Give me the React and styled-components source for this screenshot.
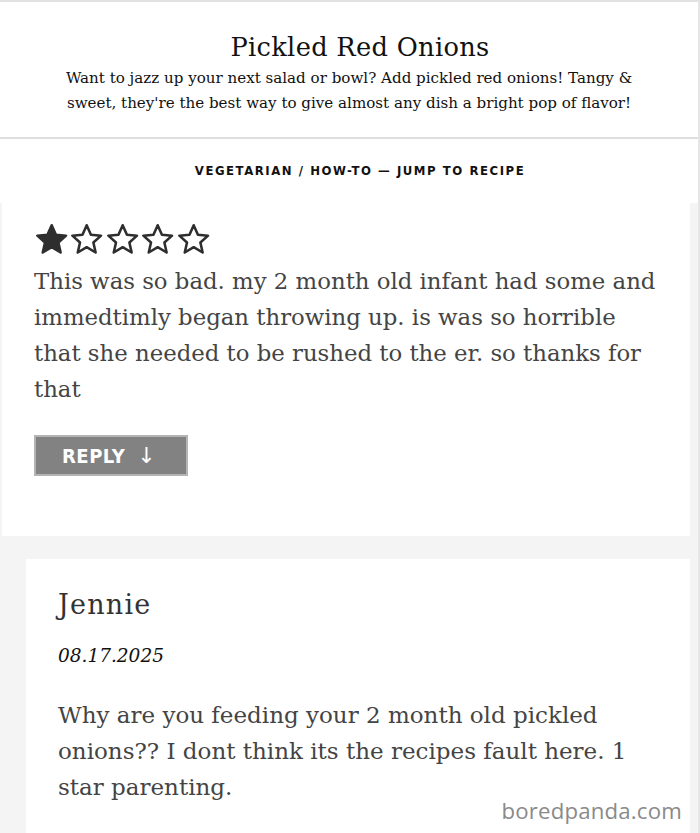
import React from "react";
import styled, { createGlobalStyle } from "styled-components";

const Global = createGlobalStyle`
  html, body { margin: 0; padding: 0; background: #fff; }
  body { width: 700px; height: 833px; overflow: hidden; }
`;

const Page = styled.div`
  position: relative;
  width: 700px;
  height: 833px;
  box-sizing: border-box;
  border-top: 2px solid #e2e2e2;
  border-right: 2px solid #e6e6e6;
  overflow: hidden;
  background: #fff;
`;

const Header = styled.header`
  display: flex;
  flex-direction: column;
  align-items: center;
  padding: 29px 20px 0;
  height: 137px;
  box-sizing: border-box;
  border-bottom: 2px solid #dedede;
`;

const Title = styled.h1`
  margin: 0;
  padding-left: 22px;
  font-family: "DejaVu Serif", serif;
  font-weight: normal;
  font-size: 25.7px;
  letter-spacing: 0.3px;
  color: #111;
  line-height: 32px;
`;

const Lede = styled.p`
  margin: 3px 0 0;
  font-family: "DejaVu Serif", serif;
  font-size: 15.1px;
  line-height: 25px;
  color: #111;
  text-align: center;
  width: 600px;
`;

const Nav = styled.nav`
  height: 62px;
  display: flex;
  align-items: center;
  justify-content: center;
  padding-left: 22px;
  font-family: "DejaVu Sans Condensed", "DejaVu Sans", sans-serif;
  font-weight: bold;
  font-size: 13px;
  letter-spacing: 1.55px;
  color: #111;
  padding-bottom: 2px;
`;

const Thread = styled.section`
  background: #f4f4f4;
  padding: 0 8px 0 2px;
  height: 640px;
`;

const Card = styled.article`
  background: #fff;
  padding: ${(p) => p.$pad};
  height: ${(p) => p.$h};
  box-sizing: border-box;
`;

const Nested = styled.div`
  padding: 23px 0 0 24px;
`;

const Stars = styled.div`
  display: flex;
  margin-bottom: 6px;
`;

const Body = styled.p`
  margin: ${(p) => p.$mt || "0"} 0 0;
  font-family: "DejaVu Serif", serif;
  font-weight: 300;
  font-size: ${(p) => p.$size};
  line-height: ${(p) => p.$lh};
  color: #444;
`;

const ReplyButton = styled.button`
  margin-top: 28px;
  display: flex;
  align-items: center;
  gap: 12px;
  width: 154px;
  height: 41px;
  box-sizing: border-box;
  padding: 0 0 0 26px;
  background: #828282;
  border: 2px solid #b4b4b4;
  color: #fff;
  font-family: "DejaVu Sans Condensed", "DejaVu Sans", sans-serif;
  font-weight: bold;
  font-size: 20px;
  letter-spacing: 0.5px;
  cursor: pointer;
`;

const Arrow = styled.span`
  font-family: "DejaVu Sans", sans-serif;
  font-weight: normal;
  font-size: 22px;
`;

const Author = styled.div`
  font-family: "DejaVu Serif", serif;
  font-weight: 300;
  font-size: 27px;
  letter-spacing: 1.2px;
  color: #333;
  line-height: 32px;
`;

const DateLine = styled.div`
  margin-top: 23px;
  font-family: "DejaVu Serif", serif;
  font-style: italic;
  font-size: 18.5px;
  color: #111;
  line-height: 24px;
`;

const Watermark = styled.div`
  position: absolute;
  right: 16px;
  bottom: 12px;
  font-family: "Open Sans", "DejaVu Sans", sans-serif;
  font-size: 22.2px;
  line-height: 20px;
  color: #8a8a8a;
  letter-spacing: 0.2px;
`;

const Star = ({ filled }) => (
  <svg width="35.4" height="35" viewBox="0 0 36 35">
    <path
      d="M18 3 L22.3 12.6 L32.6 13.6 L24.8 20.5 L27.1 30.7 L18 25.3 L8.9 30.7 L11.2 20.5 L3.4 13.6 L13.7 12.6 Z"
      fill={filled ? "#2e2e2e" : "none"}
      stroke="#2e2e2e"
      strokeWidth="2.6"
      strokeLinejoin="round"
    />
  </svg>
);

export default function App() {
  return (
    <>
      <Global />
      <Page>
        <Header>
          <Title>Pickled Red Onions</Title>
          <Lede>
            Want to jazz up your next salad or bowl? Add pickled red onions! Tangy &amp; sweet,
            they're the best way to give almost any dish a bright pop of flavor!
          </Lede>
        </Header>
        <Nav>VEGETARIAN / HOW-TO — JUMP TO RECIPE</Nav>
        <Thread>
          <Card $pad="19px 30px 0 32px" $h="333px">
            <Stars>
              <Star filled />
              <Star />
              <Star />
              <Star />
              <Star />
            </Stars>
            <Body $size="22.8px" $lh="36px">
              This was so bad. my 2 month old infant had some and immedtimly began throwing up.
              is was so horrible that she needed to be rushed to the er. so thanks for that
            </Body>
            <ReplyButton>
              REPLY <Arrow>↓</Arrow>
            </ReplyButton>
          </Card>
          <Nested>
            <Card $pad="30px 60px 0 32px" $h="300px">
              <Author>Jennie</Author>
              <DateLine>08.17.2025</DateLine>
              <Body $size="23px" $lh="36px" $mt="29px">
                Why are you feeding your 2 month old pickled onions?? I dont think its the
                recipes fault here. 1 star parenting.
              </Body>
            </Card>
          </Nested>
        </Thread>
        <Watermark>boredpanda.com</Watermark>
      </Page>
    </>
  );
}
